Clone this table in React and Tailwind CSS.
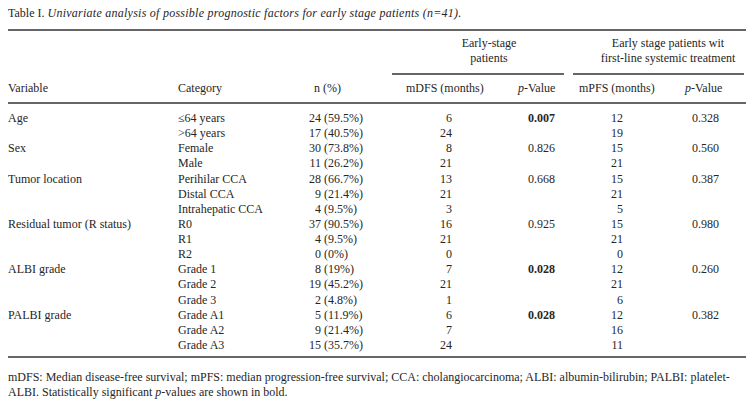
const rows = [
  ["Age", "≤64 years", "24", "59.5%", "6", "0.007", true, "12", "0.328"],
  ["", ">64 years", "17", "40.5%", "24", "", false, "19", ""],
  ["Sex", "Female", "30", "73.8%", "8", "0.826", false, "15", "0.560"],
  ["", "Male", "11", "26.2%", "21", "", false, "21", ""],
  ["Tumor location", "Perihilar CCA", "28", "66.7%", "13", "0.668", false, "15", "0.387"],
  ["", "Distal CCA", "9", "21.4%", "21", "", false, "21", ""],
  ["", "Intrahepatic CCA", "4", "9.5%", "3", "", false, "5", ""],
  ["Residual tumor (R status)", "R0", "37", "90.5%", "16", "0.925", false, "15", "0.980"],
  ["", "R1", "4", "9.5%", "21", "", false, "21", ""],
  ["", "R2", "0", "0%", "0", "", false, "0", ""],
  ["ALBI grade", "Grade 1", "8", "19%", "7", "0.028", true, "12", "0.260"],
  ["", "Grade 2", "19", "45.2%", "21", "", false, "21", ""],
  ["", "Grade 3", "2", "4.8%", "1", "", false, "6", ""],
  ["PALBI grade", "Grade A1", "5", "11.9%", "6", "0.028", true, "12", "0.382"],
  ["", "Grade A2", "9", "21.4%", "7", "", false, "16", ""],
  ["", "Grade A3", "15", "35.7%", "24", "", false, "11", ""],
];

const cols = "grid grid-cols-[170px_122px_80px_120px_66px_104px_76px]";

export default function App() {
  return (
    <div
      className="w-[754px] h-[406px] bg-white px-[8px] pt-[6px] text-[12px] leading-[15px] text-[#262626] overflow-hidden"
      style={{ fontFamily: '"Liberation Serif", serif' }}
    >
      <p className="whitespace-nowrap">
        Table I.{" "}
        <i className="tracking-[0.25px]">
          Univariate analysis of possible prognostic factors for early stage patients (n=41).
        </i>
      </p>

      <div className="mt-[8px] h-[2px] bg-[#666]" />

      {/* group headers */}
      <div className={`${cols} mt-[5px]`}>
        <div className="col-start-4 col-span-2 flex flex-col">
          <div className="pl-[32px] text-center">
            Early-stage
            <br />
            patients
          </div>
          <div className="mt-[7px] ml-[12px] mr-[2px] h-[2px] bg-[#666]" />
        </div>
        <div className="col-span-2 flex flex-col">
          <div className="pl-[24px] text-center whitespace-nowrap">
            Early stage patients wit
            <br />
            first-line systemic treatment
          </div>
          <div className="mt-[7px] ml-[7px] mr-[2px] h-[2px] bg-[#666]" />
        </div>
      </div>

      {/* column headers */}
      <div className={`${cols} mt-[6px]`}>
        <div>Variable</div>
        <div>Category</div>
        <div className="pl-[14px]">n (%)</div>
        <div className="pl-[26px]">mDFS (months)</div>
        <div className="pl-[18px]">
          <i>p</i>-Value
        </div>
        <div className="pl-[13px]">mPFS (months)</div>
        <div className="pl-[15px]">
          <i>p</i>-Value
        </div>
      </div>

      <div className="mt-[6px] h-[2px] bg-[#666]" />

      <div className="mt-[7px] leading-[15.13px]">
        {rows.map((r, i) => (
          <div key={i} className={cols}>
            <div className="whitespace-nowrap">{r[0]}</div>
            <div className="whitespace-nowrap">{r[1]}</div>
            <div className="pl-[9px] whitespace-nowrap">
              <span className="inline-block w-[12px] text-right">{r[2]}</span> ({r[3]})
            </div>
            <div className="pr-[48px] text-right">{r[4]}</div>
            <div className={`pl-[28px] ${r[6] ? "font-bold" : ""}`}>{r[5]}</div>
            <div className="pr-[47px] text-right">{r[7]}</div>
            <div className="pl-[22px]">{r[8]}</div>
          </div>
        ))}
      </div>

      <div className="mt-[3px] h-[2px] bg-[#666]" />

      <p className="mt-[12px] whitespace-nowrap">
        mDFS: Median disease-free survival; mPFS: median progression-free survival; CCA: cholangiocarcinoma; ALBI:
        albumin-bilirubin; PALBI: platelet-
        <br />
        ALBI. Statistically significant <i>p</i>-values are shown in bold.
      </p>
    </div>
  );
}
